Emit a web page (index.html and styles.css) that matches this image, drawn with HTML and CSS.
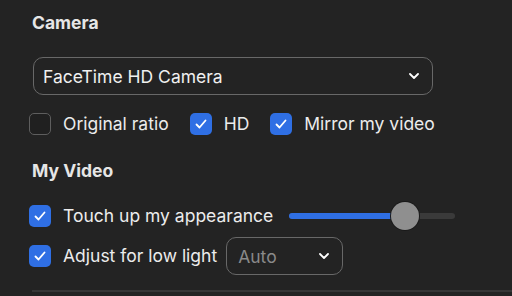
FILE: index.html
```html
<!DOCTYPE html>
<html lang="en">
<head>
  <meta charset="UTF-8" />
  <title>Video Settings</title>
  <link rel="stylesheet" href="styles.css">
</head>
<body>

  <!-- Camera -->
  <section class="group">
    <h3 class="group-title">Camera</h3>
    <div class="select select-wide">
      <span>FaceTime HD Camera</span>
      <svg class="chevron" viewBox="0 0 10 6" width="10" height="6"><path d="M1 1l4 4 4-4" fill="none" stroke="#fff" stroke-width="1.8" stroke-linecap="round" stroke-linejoin="round"/></svg>
    </div>
    <div class="check-row">
      <label class="check"><span class="box"></span>Original ratio</label>
      <label class="check"><span class="box on"><svg viewBox="0 0 22 22"><path d="M6.5 11.5l3 3 6-7" fill="none" stroke="#fff" stroke-width="1.8" stroke-linecap="round" stroke-linejoin="round"/></svg></span>HD</label>
      <label class="check"><span class="box on"><svg viewBox="0 0 22 22"><path d="M6.5 11.5l3 3 6-7" fill="none" stroke="#fff" stroke-width="1.8" stroke-linecap="round" stroke-linejoin="round"/></svg></span>Mirror my video</label>
    </div>
  </section>

  <!-- My Video -->
  <section class="group">
    <h3 class="group-title video-title">My Video</h3>
    <div class="option-row">
      <label class="check"><span class="box on"><svg viewBox="0 0 22 22"><path d="M6.5 11.5l3 3 6-7" fill="none" stroke="#fff" stroke-width="1.8" stroke-linecap="round" stroke-linejoin="round"/></svg></span>Touch up my appearance</label>
      <div class="slider">
        <div class="slider-fill" style="width: 70%"></div>
        <div class="slider-thumb" style="left: 70%"></div>
      </div>
    </div>
    <div class="option-row">
      <label class="check"><span class="box on"><svg viewBox="0 0 22 22"><path d="M6.5 11.5l3 3 6-7" fill="none" stroke="#fff" stroke-width="1.8" stroke-linecap="round" stroke-linejoin="round"/></svg></span>Adjust for low light</label>
      <div class="select select-small">
        <span>Auto</span>
        <svg class="chevron" viewBox="0 0 10 6" width="10" height="6"><path d="M1 1l4 4 4-4" fill="none" stroke="#fff" stroke-width="1.8" stroke-linecap="round" stroke-linejoin="round"/></svg>
      </div>
    </div>
  </section>

  <hr class="divider">

</body>
</html>
```

FILE: styles.css
```css
* {
  margin: 0;
  padding: 0;
  box-sizing: border-box;
  font-family: 'Inter', 'Liberation Sans', sans-serif;
}

body {
  background-color: #232323;
  color: #ececec;
  padding: 12px 0 0 29px;
  overflow: hidden;
}

/* ========== Groups ========== */
.group-title {
  font-size: 17.5px;
  font-weight: 700;
  line-height: 22px;
  color: #e6e6e6;
  padding-left: 3px;
}

.video-title {
  margin-top: 25px;
}

/* ========== Select ========== */
.select {
  display: flex;
  align-items: center;
  justify-content: space-between;
  border: 1.5px solid #686868;
  border-radius: 10px;
  font-size: 17.5px;
  color: #f0f0f0;
}

.select-wide {
  width: 400px;
  height: 38px;
  margin: 23px 0 0 4px;
  padding: 0 13px 0 9px;
}

.select-small {
  width: 117px;
  height: 38px;
  padding: 0 13px 0 11px;
  color: #8a8a8a;
  margin-left: 9px;
}

.chevron {
  display: block;
}

/* ========== Checkboxes ========== */
.check-row {
  display: flex;
  gap: 21px;
  margin-top: 17px;
  height: 23px;
  align-items: center;
}

.check {
  display: flex;
  align-items: center;
  gap: 12px;
  font-size: 17.5px;
  line-height: 22px;
  white-space: nowrap;
}

.box {
  width: 22px;
  height: 22px;
  border-radius: 5px;
  border: 1.5px solid #5e5e5e;
  background: #202020;
  flex-shrink: 0;
}

.box.on {
  border: none;
  background: #2f6fe4;
}

.box svg {
  display: block;
  width: 22px;
  height: 22px;
}

/* ========== Rows ========== */
.option-row {
  display: flex;
  align-items: center;
  height: 40px;
}

.group-title + .option-row {
  margin-top: 14px;
}

/* ========== Slider ========== */
.slider {
  position: relative;
  width: 166px;
  height: 6px;
  border-radius: 3px;
  background: #3a3a3a;
  margin-left: 16px;
}

.slider-fill {
  height: 100%;
  border-radius: 3px;
  background: #2f6fe4;
}

.slider-thumb {
  position: absolute;
  top: 50%;
  width: 28px;
  height: 28px;
  margin: -14px 0 0 -14px;
  border-radius: 50%;
  background: #8f8f8f;
  box-shadow: 0 0 0 1px #1a1a1a;
}

/* ========== Divider ========== */
.divider {
  border: none;
  border-top: 2px solid #363636;
  margin: 14px 0 0 3px;
}
```
